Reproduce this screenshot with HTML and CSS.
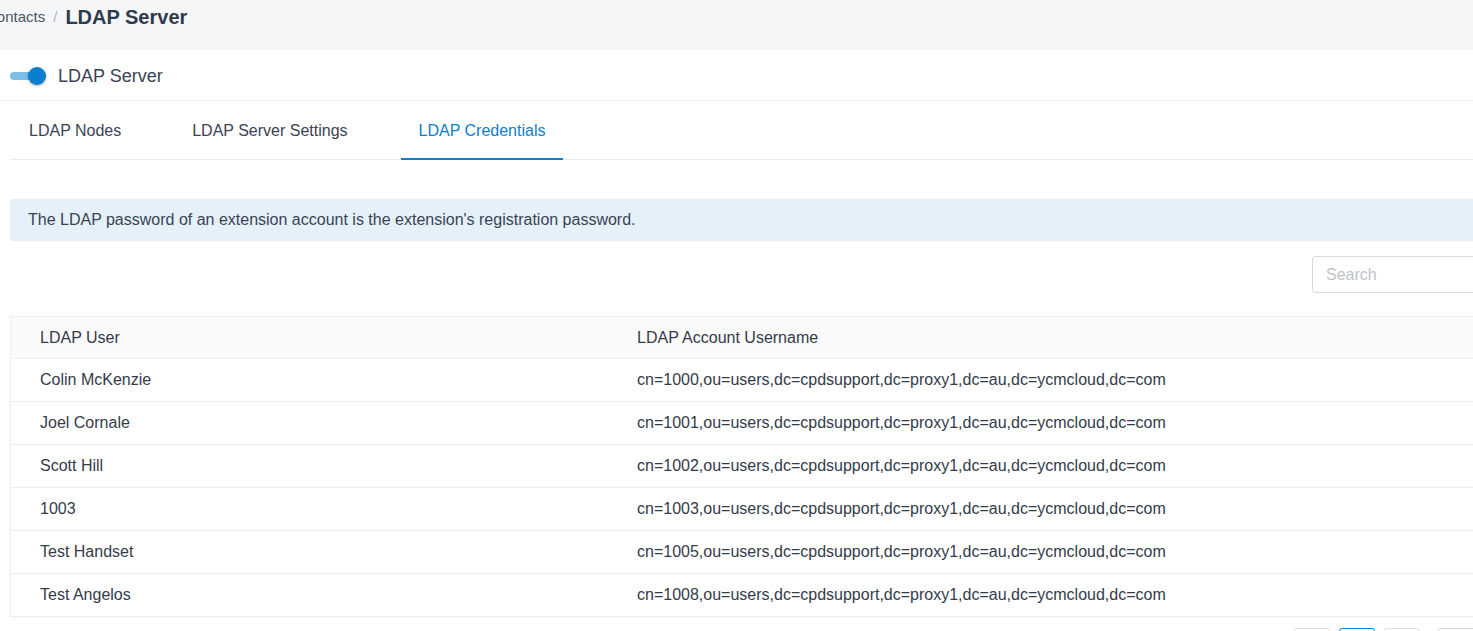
FILE: index.html
```html
<!DOCTYPE html>
<html lang="en">
<head>
    <meta charset="UTF-8">
    <meta name="viewport" content="width=device-width, initial-scale=1.0">
    <title>LDAP Server</title>
    <link rel="stylesheet" href="styles.css">
</head>
<body>
    <div class="page">
        <div class="crumbs">
            <span class="crumb">Contacts</span>
            <span class="sep">/</span>
            <span class="crumb-title">LDAP Server</span>
        </div>

        <div class="card">
            <div class="enable-row">
                <label class="switch">
                    <input type="checkbox" checked>
                    <span class="slider"></span>
                </label>
                <span class="enable-label">LDAP Server</span>
            </div>

            <div class="tabs">
                <div class="tab">LDAP Nodes</div>
                <div class="tab">LDAP Server Settings</div>
                <div class="tab active">LDAP Credentials</div>
            </div>

            <div class="notice">The LDAP password of an extension account is the extension's registration password.</div>

            <div class="toolbar">
                <input class="search" type="text" placeholder="Search">
            </div>

            <table class="grid">
                <thead>
                    <tr><th class="col-user">LDAP User</th><th>LDAP Account Username</th></tr>
                </thead>
                <tbody>
                    <tr><td>Colin McKenzie</td><td>cn=1000,ou=users,dc=cpdsupport,dc=proxy1,dc=au,dc=ycmcloud,dc=com</td></tr>
                    <tr><td>Joel Cornale</td><td>cn=1001,ou=users,dc=cpdsupport,dc=proxy1,dc=au,dc=ycmcloud,dc=com</td></tr>
                    <tr><td>Scott Hill</td><td>cn=1002,ou=users,dc=cpdsupport,dc=proxy1,dc=au,dc=ycmcloud,dc=com</td></tr>
                    <tr><td>1003</td><td>cn=1003,ou=users,dc=cpdsupport,dc=proxy1,dc=au,dc=ycmcloud,dc=com</td></tr>
                    <tr><td>Test Handset</td><td>cn=1005,ou=users,dc=cpdsupport,dc=proxy1,dc=au,dc=ycmcloud,dc=com</td></tr>
                    <tr><td>Test Angelos</td><td>cn=1008,ou=users,dc=cpdsupport,dc=proxy1,dc=au,dc=ycmcloud,dc=com</td></tr>
                </tbody>
            </table>

            <div class="pager">
                <span class="page-btn">&lsaquo;</span>
                <span class="page-btn current">1</span>
                <span class="page-btn">&rsaquo;</span>
                <span class="page-size">10 / page</span>
            </div>
        </div>
    </div>
</body>
</html>
```

FILE: styles.css
```css
html, body {
    margin: 0;
    padding: 0;
    overflow: hidden;
}
body {
    font-family: "Liberation Sans", Arial, sans-serif;
    color: #333b4a;
    background-color: #f5f6f8;
}
.page {
    width: 1500px;
}
.crumbs {
    height: 50px;
    display: flex;
    align-items: flex-start;
    margin-left: -14px;
    line-height: 34px;
}
.crumb {
    font-size: 15px;
    color: #4c5566;
}
.sep {
    font-size: 15px;
    color: #b4b9c2;
    margin: 0 8px 0 8px;
}
.crumb-title {
    font-size: 20px;
    font-weight: bold;
    color: #2f3a4c;
}
.card {
    background: white;
    padding: 0 10px 20px 10px;
}
.enable-row {
    height: 51px;
    box-sizing: border-box;
    padding: 2px 10px 0 10px;
    display: flex;
    align-items: center;
    border-bottom: 1px solid #eef0f4;
    margin: 0 -10px;
}
.switch {
    position: relative;
    display: inline-block;
    width: 36px;
    height: 18px;
    margin-right: 12px;
}
.switch input {
    opacity: 0;
    width: 0;
    height: 0;
}
.slider {
    position: absolute;
    left: 0;
    right: 6px;
    top: 5px;
    height: 8px;
    border-radius: 4px;
    background-color: #cfd3da;
}
.slider:before {
    position: absolute;
    content: "";
    width: 18px;
    height: 18px;
    top: -5px;
    left: 0;
    border-radius: 50%;
    background-color: white;
    box-shadow: 0 1px 3px rgba(0,0,0,0.3);
}
input:checked + .slider {
    background-color: #7dbde8;
}
input:checked + .slider:before {
    left: 18px;
    background-color: #0a7fd0;
}
.enable-label {
    font-size: 18px;
    color: #3a4354;
}
.tabs {
    display: flex;
    gap: 35px;
    height: 58px;
    border-bottom: 1px solid #e6e9ee;
    padding-left: 1px;
}
.tab {
    padding: 1px 18px 0 18px;
    font-size: 16px;
    line-height: 57px;
    color: #3a4354;
}
.tab.active {
    color: #0b80cc;
    border-bottom: 2px solid #0b80cc;
    margin-bottom: -1px;
    padding-top: 2px;
    line-height: 55px;
}
.notice {
    margin-top: 39px;
    height: 42px;
    line-height: 42px;
    padding-left: 18px;
    font-size: 16px;
    color: #3a4354;
    background-color: #e4f1fa;
    border-radius: 2px;
}
.toolbar {
    display: flex;
    justify-content: flex-end;
    padding: 15px 0 23px 0;
}
.search {
    width: 178px;
    height: 37px;
    box-sizing: border-box;
    border: 1px solid #d8dbe2;
    border-radius: 3px;
    padding: 0 13px;
    font-family: "Liberation Sans", Arial, sans-serif;
    font-size: 16px;
    outline: none;
}
.search::placeholder {
    color: #c0c3c8;
}
.grid {
    width: 100%;
    border-collapse: collapse;
    border: 1px solid #eceef3;
    font-size: 16px;
}
.grid th {
    height: 41px;
    background-color: #fafafa;
    font-weight: normal;
    text-align: left;
    color: #3a4354;
}
.grid th, .grid td {
    padding: 0 30px 0 29px;
    border-bottom: 1px solid #eceef3;
    color: #333b4a;
}
.grid td {
    height: 42px;
}
.col-user {
    width: 538px;
}
.pager {
    display: flex;
    justify-content: flex-end;
    gap: 9px;
    margin-top: 11px;
}
.page-btn {
    width: 36px;
    height: 32px;
    box-sizing: border-box;
    border: 1px solid #dde0e6;
    border-radius: 3px;
    text-align: center;
    line-height: 30px;
    font-size: 14px;
}
.page-btn.current {
    border-color: #0b80cc;
    color: #0b80cc;
}
.page-size {
    width: 52px;
    height: 32px;
    margin-left: 9px;
    box-sizing: border-box;
    border: 1px solid #d2d5df;
    border-radius: 3px;
    font-size: 14px;
    line-height: 30px;
    padding-left: 8px;
    overflow: hidden;
    white-space: nowrap;
}
```
